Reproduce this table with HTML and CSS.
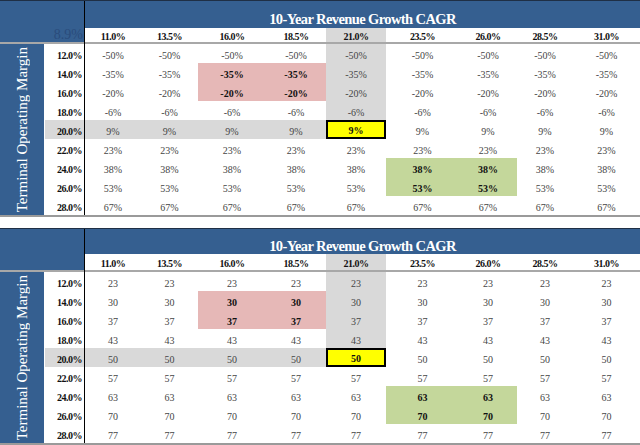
FILE: index.html
```html
<!DOCTYPE html>
<html>
<head>
<meta charset="utf-8">
<link rel="stylesheet" href="styles.css">
</head>
<body>
<div class="sheet t1">
  <div class="corner">8.9%</div>
  <div class="vline"></div>
  <div class="title">10-Year Revenue Growth CAGR</div>
  <div class="hd">11.0%</div><div class="hd">13.5%</div><div class="hd">16.0%</div><div class="hd">18.5%</div><div class="hd gy">21.0%</div><div class="hd">23.5%</div><div class="hd">26.0%</div><div class="hd">28.5%</div><div class="hd">31.0%</div>
  <div class="side"><span>Terminal Operating Margin</span></div>

  <div class="lbl">12.0%</div><div class="c">-50%</div><div class="c">-50%</div><div class="c">-50%</div><div class="c">-50%</div><div class="c gy">-50%</div><div class="c">-50%</div><div class="c">-50%</div><div class="c">-50%</div><div class="c">-50%</div>
  <div class="lbl">14.0%</div><div class="c">-35%</div><div class="c">-35%</div><div class="c pk">-35%</div><div class="c pk">-35%</div><div class="c gy">-35%</div><div class="c">-35%</div><div class="c">-35%</div><div class="c">-35%</div><div class="c">-35%</div>
  <div class="lbl">16.0%</div><div class="c">-20%</div><div class="c">-20%</div><div class="c pk">-20%</div><div class="c pk">-20%</div><div class="c gy">-20%</div><div class="c">-20%</div><div class="c">-20%</div><div class="c">-20%</div><div class="c">-20%</div>
  <div class="lbl">18.0%</div><div class="c">-6%</div><div class="c">-6%</div><div class="c">-6%</div><div class="c">-6%</div><div class="c gy">-6%</div><div class="c">-6%</div><div class="c">-6%</div><div class="c">-6%</div><div class="c">-6%</div>
  <div class="lbl gy">20.0%</div><div class="c gy">9%</div><div class="c gy">9%</div><div class="c gy">9%</div><div class="c gy">9%</div><div class="c yl">9%</div><div class="c">9%</div><div class="c">9%</div><div class="c">9%</div><div class="c">9%</div>
  <div class="lbl">22.0%</div><div class="c">23%</div><div class="c">23%</div><div class="c">23%</div><div class="c">23%</div><div class="c">23%</div><div class="c">23%</div><div class="c">23%</div><div class="c">23%</div><div class="c">23%</div>
  <div class="lbl">24.0%</div><div class="c">38%</div><div class="c">38%</div><div class="c">38%</div><div class="c">38%</div><div class="c">38%</div><div class="c gn">38%</div><div class="c gn">38%</div><div class="c">38%</div><div class="c">38%</div>
  <div class="lbl">26.0%</div><div class="c">53%</div><div class="c">53%</div><div class="c">53%</div><div class="c">53%</div><div class="c">53%</div><div class="c gn">53%</div><div class="c gn">53%</div><div class="c">53%</div><div class="c">53%</div>
  <div class="lbl">28.0%</div><div class="c">67%</div><div class="c">67%</div><div class="c">67%</div><div class="c">67%</div><div class="c">67%</div><div class="c">67%</div><div class="c">67%</div><div class="c">67%</div><div class="c">67%</div>
</div>

<div class="sheet t2">
  <div class="corner"></div>
  <div class="vline"></div>
  <div class="title">10-Year Revenue Growth CAGR</div>
  <div class="hd">11.0%</div><div class="hd">13.5%</div><div class="hd">16.0%</div><div class="hd">18.5%</div><div class="hd gy">21.0%</div><div class="hd">23.5%</div><div class="hd">26.0%</div><div class="hd">28.5%</div><div class="hd">31.0%</div>
  <div class="side"><span>Terminal Operating Margin</span></div>

  <div class="lbl">12.0%</div><div class="c">23</div><div class="c">23</div><div class="c">23</div><div class="c">23</div><div class="c gy">23</div><div class="c">23</div><div class="c">23</div><div class="c">23</div><div class="c">23</div>
  <div class="lbl">14.0%</div><div class="c">30</div><div class="c">30</div><div class="c pk">30</div><div class="c pk">30</div><div class="c gy">30</div><div class="c">30</div><div class="c">30</div><div class="c">30</div><div class="c">30</div>
  <div class="lbl">16.0%</div><div class="c">37</div><div class="c">37</div><div class="c pk">37</div><div class="c pk">37</div><div class="c gy">37</div><div class="c">37</div><div class="c">37</div><div class="c">37</div><div class="c">37</div>
  <div class="lbl">18.0%</div><div class="c">43</div><div class="c">43</div><div class="c">43</div><div class="c">43</div><div class="c gy">43</div><div class="c">43</div><div class="c">43</div><div class="c">43</div><div class="c">43</div>
  <div class="lbl gy">20.0%</div><div class="c gy">50</div><div class="c gy">50</div><div class="c gy">50</div><div class="c gy">50</div><div class="c yl">50</div><div class="c">50</div><div class="c">50</div><div class="c">50</div><div class="c">50</div>
  <div class="lbl">22.0%</div><div class="c">57</div><div class="c">57</div><div class="c">57</div><div class="c">57</div><div class="c">57</div><div class="c">57</div><div class="c">57</div><div class="c">57</div><div class="c">57</div>
  <div class="lbl">24.0%</div><div class="c">63</div><div class="c">63</div><div class="c">63</div><div class="c">63</div><div class="c">63</div><div class="c gn">63</div><div class="c gn">63</div><div class="c">63</div><div class="c">63</div>
  <div class="lbl">26.0%</div><div class="c">70</div><div class="c">70</div><div class="c">70</div><div class="c">70</div><div class="c">70</div><div class="c gn">70</div><div class="c gn">70</div><div class="c">70</div><div class="c">70</div>
  <div class="lbl">28.0%</div><div class="c">77</div><div class="c">77</div><div class="c">77</div><div class="c">77</div><div class="c">77</div><div class="c">77</div><div class="c">77</div><div class="c">77</div><div class="c">77</div>
</div>
</body>
</html>
```
FILE: styles.css
```css
html, body {
  margin: 0;
  padding: 0;
  background: #ffffff;
}
body {
  font-family: "Liberation Serif", "Times New Roman", serif;
  width: 640px;
  height: 445px;
  overflow: hidden;
}
.sheet {
  display: grid;
  grid-template-columns: 44px 40px 1px 56px 57px 68px 60px 60px 73px 58px 56px 67px;
  border-top: 1px solid #1f2f45;
  border-bottom: 2px solid #9a9a9a;
  background: #ffffff;
}
.t1 {
  grid-template-rows: 27px 16px repeat(9, 19px);
}
.t2 {
  margin-top: 11px;
  grid-template-rows: 25px 18px repeat(9, 19px);
}
.sheet > div {
  box-sizing: border-box;
}
.corner {
  grid-column: 1 / 3;
  grid-row: 1 / 3;
  background: #355f90;
  border-bottom: 2px solid #a8a8a8;
  color: #2a4c7c;
  font-size: 14px;
  display: flex;
  align-items: flex-end;
  justify-content: flex-end;
  padding: 0 1px 0 0;
  line-height: 15px;
}
.vline {
  grid-column: 3;
  grid-row: 1 / -1;
  background: #000000;
}
.title {
  grid-column: 4 / 13;
  grid-row: 1;
  background: #355f90;
  color: #ffffff;
  font-weight: bold;
  font-size: 14.5px;
  letter-spacing: -0.6px;
  display: flex;
  align-items: flex-end;
  justify-content: center;
  padding-bottom: 1px;
  line-height: 16px;
}
.t2 .title {
  padding-bottom: 0;
}
.hd {
  grid-row: 2;
  font-weight: bold;
  font-size: 10px;
  letter-spacing: -0.5px;
  color: #111111;
  display: flex;
  align-items: flex-end;
  justify-content: center;
  line-height: 11px;
  padding-bottom: 0;
  border-bottom: 2px solid #a8a8a8;
}
.t2 .hd {
  padding-bottom: 1px;
}
.side {
  grid-column: 1;
  grid-row: 3 / 12;
  background: #355f90;
  display: flex;
  align-items: center;
  justify-content: center;
}
.side span {
  writing-mode: vertical-rl;
  transform: rotate(180deg);
  color: #ffffff;
  font-size: 15px;
  white-space: nowrap;
}
.lbl {
  grid-column: 2;
  font-weight: bold;
  font-size: 10px;
  letter-spacing: -0.5px;
  color: #111111;
  display: flex;
  align-items: flex-end;
  justify-content: flex-end;
  padding: 0 2px 1px 0;
  line-height: 12px;
}
.c {
  font-size: 10px;
  color: #454545;
  display: flex;
  align-items: flex-end;
  justify-content: center;
  padding-bottom: 1px;
  line-height: 12px;
}
.gy {
  background: #d9d9d9;
}
.lbl.gy {
  margin-left: 1px;
}
.pk {
  background: #e6b8b7;
  font-weight: bold;
  color: #111111;
}
.gn {
  background: #c4d79b;
  font-weight: bold;
  color: #111111;
}
.yl {
  background: #ffff00;
  border: 2px solid #000000;
  font-weight: bold;
  color: #111111;
  padding-bottom: 0;
}
```
